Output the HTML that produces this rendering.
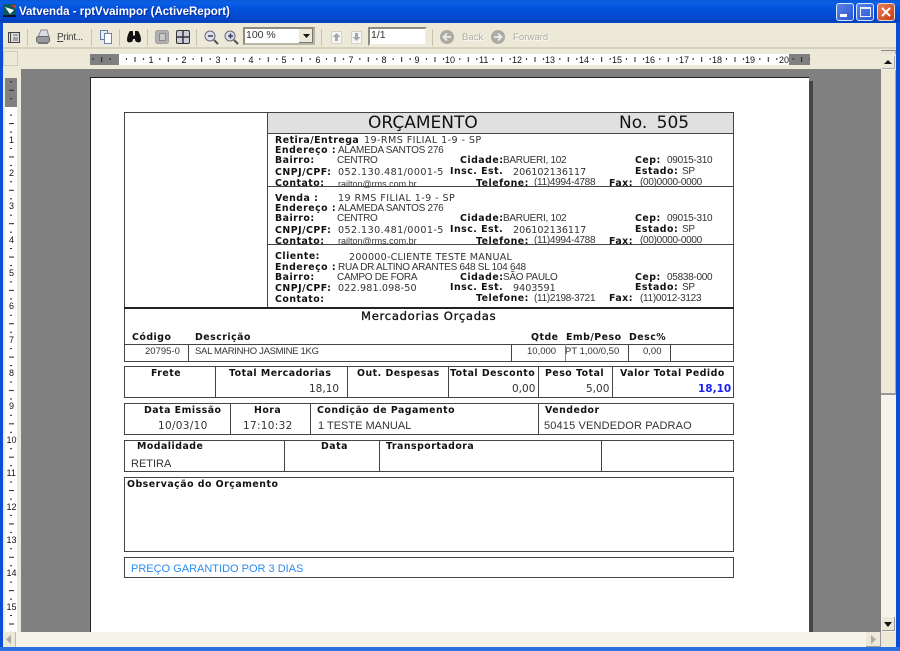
<!DOCTYPE html>
<html><head><meta charset="utf-8"><style>
html,body{margin:0;padding:0}
#w{position:relative;width:900px;height:651px;overflow:hidden;background:#ece9d8;font-family:"Liberation Sans",sans-serif}
#w div{position:absolute}
.t{position:absolute;white-space:nowrap;line-height:12px;color:#222}
.b{font-family:"DejaVu Sans",sans-serif;font-weight:bold;font-size:9.4px;color:#111;letter-spacing:.5px}
.v{font-family:"DejaVu Sans",sans-serif;font-size:9.6px;color:#333}
.sp{letter-spacing:.42px}
.a{font-size:10px;color:#333;letter-spacing:-.28px}
.r{font-size:9.5px;color:#333}
.g{font-size:11px;color:#333}
.n{font-size:9px;color:#111}
.h,.k{background:#444;position:absolute}
.box{border:1px solid #444;box-sizing:border-box}
.gt{font-family:"Liberation Sans",sans-serif;font-size:9.6px;color:#aeaca0}
</style></head><body><div id="w">
<!-- title bar -->
<div style="left:0;top:0;width:900px;height:23px;background:linear-gradient(#0a58d8 0,#0a5fe6 3px,#0352dc 8px,#0148cf 18px,#0340b8 22px,#0a4ec8 23px)"></div>
<div style="left:0;top:23px;width:3px;height:628px;background:#0a4fd6"></div>
<div style="left:896px;top:23px;width:4px;height:628px;background:#0a4fd6"></div>
<div style="left:0;top:647px;width:900px;height:4px;background:#2a70e0"></div>
<svg style="position:absolute;left:2px;top:3px" width="16" height="16"><rect x="1" y="1" width="13" height="12" fill="#0d5a5a"/><path d="M3 4l9 3-4 4z" fill="#fff"/><path d="M9 2h5v4z" fill="#d33"/><rect x="1" y="12" width="13" height="2" fill="#113"/></svg>
<span class="t" style="left:19px;top:5px;font-weight:bold;font-size:11.5px;line-height:14px;color:#fff;text-shadow:1px 1px 0 #0a2f9c">Vatvenda - rptVvaimpor (ActiveReport)</span>
<!-- window buttons -->
<div style="left:836px;top:3px;width:16px;height:16px;border:1px solid #dbe6fb;border-radius:3px;background:linear-gradient(135deg,#5a84ec,#2a55d0)"></div>
<div style="left:840px;top:14px;width:7px;height:3px;background:#fff"></div>
<div style="left:856px;top:3px;width:16px;height:16px;border:1px solid #dbe6fb;border-radius:3px;background:linear-gradient(135deg,#5a84ec,#2a55d0)"></div>
<div style="left:860px;top:7px;width:9px;height:7px;border:1px solid #e8f0ff;border-top:2px solid #e8f0ff"></div>
<div style="left:877px;top:3px;width:16px;height:16px;border:1px solid #f0d8cc;border-radius:3px;background:linear-gradient(135deg,#e8805a,#c83c10)"></div>
<svg style="position:absolute;left:877px;top:3px" width="18" height="18"><path d="M5 5l8 8M13 5l-8 8" stroke="#fff" stroke-width="2"/></svg>
<!-- toolbar -->
<div style="left:3px;top:47px;width:893px;height:2px;background:#d6d2c0"></div>
<svg style="position:absolute;left:0;top:23px" width="560" height="25">
<g stroke="#c5c2b0"><path d="M27.500 6v17M91.500 6v17M119.500 6v17M147.500 6v17M196.500 6v17M321.500 6v17M432.500 6v17"/></g>
<rect x="8.500" y="9.500" width="11" height="10" fill="#ddd" stroke="#444"/><path d="M10.500 9v11" stroke="#444"/><path d="M13 12h5M13 15h5M13 17h5" stroke="#667"/>
<path d="M38 14l3-7h6l2 7z" fill="#d8dde6" stroke="#889"/><rect x="36.500" y="13.500" width="13" height="6" rx="2" fill="#9a9aa0" stroke="#666"/><rect x="38" y="19" width="10" height="2" fill="#777"/>
<rect x="100.500" y="7.500" width="7" height="9" fill="#e8eefa" stroke="#667a9a"/><rect x="104.500" y="10.500" width="7" height="10" fill="#fff" stroke="#6a80a8"/>
<path d="M127 17c0-4 2-8 3-9h3v4l1 1h0l1-1v-4h3c1 1 3 5 3 9 0 2-2 3-4 2-1 0-2-1-2-3h-2c0 2-1 3-2 3-2 1-4 0-4-2z" fill="#111"/>
<rect x="155.500" y="7.500" width="13" height="13" rx="2" fill="#b0b0b0" stroke="#a0a0a0"/><rect x="159.500" y="10.500" width="6" height="7" fill="#c8c8c8" stroke="#8a8a8a"/>
<rect x="176.500" y="7.500" width="13" height="13" rx="1.500" fill="#ccd" stroke="#333"/><path d="M183 8v12M177 14h12" stroke="#333" stroke-width="1.500"/>
<circle cx="210" cy="13" r="5" fill="#dde" stroke="#667"/><path d="M208 13h5" stroke="#345" stroke-width="1.500"/><path d="M214 17l4 4" stroke="#555" stroke-width="2"/>
<circle cx="230" cy="13" r="5" fill="#dde" stroke="#667"/><path d="M228 13h5M230.500 10.500v5" stroke="#345" stroke-width="1.500"/><path d="M234 17l4 4" stroke="#555" stroke-width="2"/>
<rect x="331.500" y="8.500" width="10" height="12" fill="#f6f6f2" stroke="#d4d2c6"/><path d="M336.500 10l4 4h-2.500v4h-3v-4h-2.500z" fill="#a4aaa8"/>
<rect x="351.500" y="8.500" width="10" height="12" fill="#f6f6f2" stroke="#d4d2c6"/><path d="M356.500 18l4-4h-2.500v-4h-3v4h-2.500z" fill="#a4aaa8"/>
<circle cx="447" cy="14" r="7" fill="#acaba3"/><path d="M451 14h-7M447 10.500l-3.500 3.500 3.500 3.500" fill="none" stroke="#eee" stroke-width="1.800"/>
<circle cx="498" cy="14" r="7" fill="#acaba3"/><path d="M494 14h7M498 10.500l3.500 3.500-3.500 3.500" fill="none" stroke="#eee" stroke-width="1.800"/>
</svg>
<span class="t n" style="left:57px;top:32px;font-size:10px;color:#444;letter-spacing:-.4px"><u>P</u>rint...</span>
<div style="left:243px;top:27px;width:72px;height:18px;background:#fff;box-sizing:border-box;border:2px solid;border-color:#8e8c7e #b8b6a4 #b8b6a4 #8e8c7e"></div>
<span class="t" style="left:246px;top:29px;font-size:10.5px;color:#333">100 %</span>
<div style="left:299px;top:29px;width:14px;height:14px;background:#ece9d8;border-right:1px solid #777;border-bottom:1px solid #777;box-sizing:border-box"></div>
<svg style="position:absolute;left:303px;top:33px" width="8" height="6"><path d="M0 1h7l-3.500 4z" fill="#111"/></svg>
<div style="left:368px;top:27px;width:59px;height:19px;background:#fff;box-sizing:border-box;border:2px solid;border-color:#8e8c7e #eeecdf #eeecdf #8e8c7e"></div>
<span class="t" style="left:371px;top:29px;font-size:10.5px;color:#333">1/1</span>
<span class="t gt" style="left:462px;top:32px;text-shadow:1px 1px 0 #fff">Back</span>
<span class="t gt" style="left:513px;top:32px;text-shadow:1px 1px 0 #fff">Forward</span>
<!-- ruler row -->
<div style="left:3px;top:51px;width:15px;height:15px;box-sizing:border-box;border:1px solid #d0ccba"></div>
<div style="left:21px;top:69px;width:860px;height:563px;background:#808080"></div>
<div style="left:90px;top:54px;width:720px;height:11px;background:#fff"></div>
<div style="left:90px;top:54px;width:29px;height:11px;background:#808080"></div>
<div style="left:789px;top:54px;width:21px;height:11px;background:#808080"></div>
<div style="left:5px;top:78px;width:12px;height:554px;background:#fff"></div>
<div style="left:5px;top:78px;width:12px;height:29px;background:#808080"></div>
<svg style="position:absolute;left:0;top:0" width="900" height="651">
<defs>
<pattern id="ph" patternUnits="userSpaceOnUse" x="118" y="54" width="33.333" height="11"><rect x="8" y="4" width="1" height="2" fill="#222"/><rect x="16.500" y="3" width="1" height="5" fill="#222"/><rect x="25" y="4" width="1" height="2" fill="#222"/></pattern>
<pattern id="pv" patternUnits="userSpaceOnUse" x="5" y="106.600" width="12" height="33.360"><rect x="5" y="8" width="2" height="1" fill="#222"/><rect x="4" y="16.500" width="5" height="1" fill="#222"/><rect x="5" y="25" width="2" height="1" fill="#222"/></pattern>
</defs>
<rect x="90" y="54" width="720" height="11" fill="url(#ph)"/>
<rect x="5" y="78" width="12" height="554" fill="url(#pv)"/>
</svg>
<span class="t n" style="left:148.500px;top:54px">1</span><span class="t n" style="left:181.500px;top:54px">2</span><span class="t n" style="left:215.500px;top:54px">3</span><span class="t n" style="left:248.500px;top:54px">4</span><span class="t n" style="left:281.500px;top:54px">5</span><span class="t n" style="left:315.500px;top:54px">6</span><span class="t n" style="left:348.500px;top:54px">7</span><span class="t n" style="left:381.500px;top:54px">8</span><span class="t n" style="left:414.500px;top:54px">9</span>
<span class="t n" style="left:445px;top:54px">10</span><span class="t n" style="left:479px;top:54px">11</span><span class="t n" style="left:512px;top:54px">12</span><span class="t n" style="left:545px;top:54px">13</span><span class="t n" style="left:579px;top:54px">14</span><span class="t n" style="left:612px;top:54px">15</span><span class="t n" style="left:645px;top:54px">16</span><span class="t n" style="left:679px;top:54px">17</span><span class="t n" style="left:712px;top:54px">18</span><span class="t n" style="left:745px;top:54px">19</span><span class="t n" style="left:779px;top:54px">20</span>
<span class="t n" style="left:9px;top:134px">1</span><span class="t n" style="left:9px;top:167px">2</span><span class="t n" style="left:9px;top:200px">3</span><span class="t n" style="left:9px;top:234px">4</span><span class="t n" style="left:9px;top:267px">5</span><span class="t n" style="left:9px;top:300px">6</span><span class="t n" style="left:9px;top:334px">7</span><span class="t n" style="left:9px;top:367px">8</span><span class="t n" style="left:9px;top:400px">9</span>
<span class="t n" style="left:6.500px;top:434px">10</span><span class="t n" style="left:6.500px;top:467px">11</span><span class="t n" style="left:6.500px;top:501px">12</span><span class="t n" style="left:6.500px;top:534px">13</span><span class="t n" style="left:6.500px;top:567px">14</span><span class="t n" style="left:6.500px;top:601px">15</span>
<!-- page -->
<div style="left:90px;top:77px;width:719px;height:555px;background:#fff;border-left:1px solid #222;border-top:1px solid #222;box-sizing:border-box"></div>
<div style="left:809px;top:81px;width:4px;height:551px;background:#454545"></div>
<!-- scrollbars -->
<div style="left:881px;top:69px;width:15px;height:563px;background:#f5f3ea"></div>
<div style="left:881px;top:52px;width:15px;height:17px;background:#ece9d8"></div>
<div style="left:881px;top:50px;width:15px;height:4px;background:#e6e3d4;border-top:1px solid #888;border-right:1px solid #aaa;box-sizing:border-box"></div>
<div style="left:882px;top:56px;width:13px;height:13px;background:#ece9d8;border-right:1px solid #aaa;border-bottom:1px solid #aaa;box-sizing:border-box"></div>
<svg style="position:absolute;left:884px;top:60px" width="9" height="6"><path d="M4 0l4 4H0z" fill="#111"/></svg>
<div style="left:881px;top:70px;width:15px;height:325px;background:#ece9d8;border-right:1px solid #aaa;border-bottom:2px solid #999;box-sizing:border-box"></div>
<div style="left:882px;top:617px;width:13px;height:14px;background:#ece9d8;border-right:1px solid #999;border-bottom:1px solid #999;box-sizing:border-box"></div>
<svg style="position:absolute;left:884px;top:622px" width="9" height="6"><path d="M0 0h8L4 5z" fill="#111"/></svg>
<div style="left:3px;top:632px;width:878px;height:15px;background:#f5f3ea"></div>
<div style="left:3px;top:632px;width:13px;height:15px;background:#ece9d8;border-right:1px solid #bbb;box-sizing:border-box"></div>
<svg style="position:absolute;left:5px;top:635px" width="8" height="10"><path d="M6 0v9L1 4.500z" fill="#aaa"/></svg>
<div style="left:866px;top:632px;width:15px;height:15px;background:#ece9d8;border-right:1px solid #999;border-bottom:1px solid #999;box-sizing:border-box"></div>
<svg style="position:absolute;left:870px;top:635px" width="8" height="10"><path d="M1 0v9l5-4.500z" fill="#aaa"/></svg>
<div style="left:881px;top:632px;width:15px;height:15px;background:#ece9d8"></div>
<!-- form: top -->
<div style="left:268px;top:113px;width:465px;height:20px;background:#e0e0e0"></div>
<div class="box" style="left:124px;top:112px;width:610px;height:250px"></div>
<div class="k" style="left:267px;top:112px;width:1px;height:196px"></div>
<div class="h" style="left:267px;top:133px;width:466px;height:1px"></div>
<div class="h" style="left:267px;top:186px;width:466px;height:1px"></div>
<div class="h" style="left:267px;top:244px;width:466px;height:1px"></div>
<div class="h" style="left:124px;top:307px;width:610px;height:2px;background:#222"></div>
<span class="t" style="left:368px;top:114px;font:17px/18px 'DejaVu Sans',sans-serif;color:#111">ORÇAMENTO</span>
<span class="t" style="left:619px;top:114px;font:17px/18px 'DejaVu Sans',sans-serif;color:#111;word-spacing:4px">No. 505</span>
<!-- block 1 -->
<span class="t b" style="left:275px;top:135px">Retira/Entrega</span><span class="t v sp" style="left:364px;top:135px">19-RMS FILIAL 1-9 - SP</span>
<span class="t b" style="left:275px;top:145px">Endereço :</span><span class="t a" style="left:338px;top:145px">ALAMEDA SANTOS 276</span>
<span class="t b" style="left:275px;top:155px">Bairro:</span><span class="t a" style="left:337px;top:155px">CENTRO</span><span class="t b" style="left:460px;top:155px">Cidade:</span><span class="t a" style="left:503px;top:155px">BARUERI, 102</span><span class="t b" style="left:635px;top:155px">Cep:</span><span class="t a" style="left:667px;top:155px">09015-310</span>
<span class="t b" style="left:275px;top:167px">CNPJ/CPF:</span><span class="t v sp" style="left:338px;top:167px">052.130.481/0001-5</span><span class="t b" style="left:450px;top:166px">Insc. Est.</span><span class="t v" style="left:513px;top:167px">206102136117</span><span class="t b" style="left:635px;top:166px">Estado:</span><span class="t a" style="left:682px;top:166px">SP</span>
<span class="t b" style="left:275px;top:178px">Contato:</span><span class="t n" style="left:338px;top:178px;color:#333">railton@rms.com.br</span><span class="t b" style="left:476px;top:178px">Telefone:</span><span class="t a" style="left:534px;top:177px">(11)4994-4788</span><span class="t b" style="left:609px;top:178px">Fax:</span><span class="t a" style="left:640px;top:177px">(00)0000-0000</span>
<!-- block 2 -->
<span class="t b" style="left:275px;top:193px">Venda :</span><span class="t v sp" style="left:338px;top:193px">19 RMS FILIAL 1-9 - SP</span>
<span class="t b" style="left:275px;top:203px">Endereço :</span><span class="t a" style="left:338px;top:203px">ALAMEDA SANTOS 276</span>
<span class="t b" style="left:275px;top:213px">Bairro:</span><span class="t a" style="left:337px;top:213px">CENTRO</span><span class="t b" style="left:460px;top:213px">Cidade:</span><span class="t a" style="left:503px;top:213px">BARUERI, 102</span><span class="t b" style="left:635px;top:213px">Cep:</span><span class="t a" style="left:667px;top:213px">09015-310</span>
<span class="t b" style="left:275px;top:225px">CNPJ/CPF:</span><span class="t v sp" style="left:338px;top:225px">052.130.481/0001-5</span><span class="t b" style="left:450px;top:224px">Insc. Est.</span><span class="t v" style="left:513px;top:225px">206102136117</span><span class="t b" style="left:635px;top:224px">Estado:</span><span class="t a" style="left:682px;top:224px">SP</span>
<span class="t b" style="left:275px;top:236px">Contato:</span><span class="t n" style="left:338px;top:235px;color:#333">railton@rms.com.br</span><span class="t b" style="left:476px;top:236px">Telefone:</span><span class="t a" style="left:534px;top:235px">(11)4994-4788</span><span class="t b" style="left:609px;top:236px">Fax:</span><span class="t a" style="left:640px;top:235px">(00)0000-0000</span>
<!-- block 3 -->
<span class="t b" style="left:275px;top:251px">Cliente:</span><span class="t v" style="left:349px;top:252px;letter-spacing:.22px">200000-CLIENTE TESTE MANUAL</span>
<span class="t b" style="left:275px;top:262px">Endereço :</span><span class="t a" style="left:338px;top:262px">RUA DR ALTINO ARANTES 648 SL 104 648</span>
<span class="t b" style="left:275px;top:272px">Bairro:</span><span class="t a" style="left:337px;top:272px">CAMPO DE FORA</span><span class="t b" style="left:460px;top:272px">Cidade:</span><span class="t a" style="left:503px;top:272px">SÃO PAULO</span><span class="t b" style="left:635px;top:272px">Cep:</span><span class="t a" style="left:667px;top:272px">05838-000</span>
<span class="t b" style="left:275px;top:283px">CNPJ/CPF:</span><span class="t v" style="left:338px;top:283px;letter-spacing:.15px">022.981.098-50</span><span class="t b" style="left:450px;top:282px">Insc. Est.</span><span class="t v" style="left:513px;top:283px">9403591</span><span class="t b" style="left:635px;top:282px">Estado:</span><span class="t a" style="left:682px;top:282px">SP</span>
<span class="t b" style="left:275px;top:294px">Contato:</span><span class="t b" style="left:476px;top:293px">Telefone:</span><span class="t a" style="left:534px;top:293px">(11)2198-3721</span><span class="t b" style="left:609px;top:293px">Fax:</span><span class="t a" style="left:640px;top:293px">(11)0012-3123</span>
<!-- mercadorias -->
<span class="t b" style="left:361px;top:310px;font-size:11.600px;font-weight:normal;-webkit-text-stroke:.3px #111;letter-spacing:.7px">Mercadorias Orçadas</span>
<span class="t b" style="left:132px;top:332px">Código</span><span class="t b" style="left:195px;top:332px">Descrição</span><span class="t b" style="left:531px;top:332px">Qtde</span><span class="t b" style="left:566px;top:332px">Emb/Peso</span><span class="t b" style="left:629px;top:332px">Desc%</span>
<div class="h" style="left:124px;top:344px;width:610px;height:1px"></div>
<div class="k" style="left:188px;top:344px;width:1px;height:17px"></div><div class="k" style="left:511px;top:344px;width:1px;height:17px"></div><div class="k" style="left:628px;top:344px;width:1px;height:17px"></div><div class="k" style="left:670px;top:344px;width:1px;height:17px"></div><div class="k" style="left:565px;top:344px;width:1px;height:17px;background:#888"></div>
<span class="t r" style="left:145px;top:346px">20795-0</span><span class="t r" style="left:195px;top:346px;letter-spacing:-.3px">SAL MARINHO JASMINE 1KG</span><span class="t r" style="left:527px;top:346px">10,000</span><span class="t r" style="left:565px;top:346px">PT 1,00/0,50</span><span class="t r" style="left:643px;top:346px">0,00</span>
<!-- totals -->
<div class="box" style="left:124px;top:366px;width:610px;height:32px"></div>
<div class="k" style="left:215px;top:366px;width:1px;height:32px"></div><div class="k" style="left:347px;top:366px;width:1px;height:32px"></div><div class="k" style="left:448px;top:366px;width:1px;height:32px"></div><div class="k" style="left:538px;top:366px;width:1px;height:32px"></div><div class="k" style="left:612px;top:366px;width:1px;height:32px"></div>
<span class="t b" style="left:151px;top:368px">Frete</span><span class="t b" style="left:229px;top:368px">Total Mercadorias</span><span class="t b" style="left:357px;top:368px">Out. Despesas</span><span class="t b" style="left:450px;top:368px">Total Desconto</span><span class="t b" style="left:545px;top:368px">Peso Total</span><span class="t b" style="left:620px;top:368px">Valor Total Pedido</span>
<span class="t v" style="left:309px;top:383px;font-size:10.500px">18,10</span><span class="t v" style="left:512px;top:383px;font-size:10.500px">0,00</span><span class="t v" style="left:586px;top:383px;font-size:10.500px">5,00</span><span class="t b" style="left:698px;top:383px;font-size:10.500px;color:#1a22e8;letter-spacing:0">18,10</span>
<!-- data -->
<div class="box" style="left:124px;top:403px;width:610px;height:32px"></div>
<div class="k" style="left:230px;top:403px;width:1px;height:32px"></div><div class="k" style="left:310px;top:403px;width:1px;height:32px"></div><div class="k" style="left:538px;top:403px;width:1px;height:32px"></div>
<span class="t b" style="left:144px;top:405px">Data Emissão</span><span class="t b" style="left:254px;top:405px">Hora</span><span class="t b" style="left:317px;top:405px">Condição de Pagamento</span><span class="t b" style="left:545px;top:405px">Vendedor</span>
<span class="t v" style="left:158px;top:420px;font-size:10.500px;letter-spacing:.3px">10/03/10</span><span class="t v" style="left:243px;top:420px;font-size:10.500px;letter-spacing:.3px">17:10:32</span><span class="t g" style="left:318px;top:420px">1 TESTE MANUAL</span><span class="t g" style="left:544px;top:420px;letter-spacing:.15px">50415 VENDEDOR PADRAO</span>
<!-- modalidade -->
<div class="box" style="left:124px;top:440px;width:610px;height:32px"></div>
<div class="k" style="left:284px;top:440px;width:1px;height:32px"></div><div class="k" style="left:379px;top:440px;width:1px;height:32px"></div><div class="k" style="left:601px;top:440px;width:1px;height:32px"></div>
<span class="t b" style="left:137px;top:441px">Modalidade</span><span class="t b" style="left:321px;top:441px">Data</span><span class="t b" style="left:386px;top:441px">Transportadora</span>
<span class="t g" style="left:131px;top:458px">RETIRA</span>
<!-- obs -->
<div class="box" style="left:124px;top:477px;width:610px;height:75px"></div>
<span class="t b" style="left:127px;top:479px">Observação do Orçamento</span>
<div class="box" style="left:124px;top:557px;width:610px;height:21px"></div>
<span class="t g" style="left:131px;top:563px;color:#2a8cf0">PREÇO GARANTIDO POR 3 DIAS</span>
</div></body></html>
